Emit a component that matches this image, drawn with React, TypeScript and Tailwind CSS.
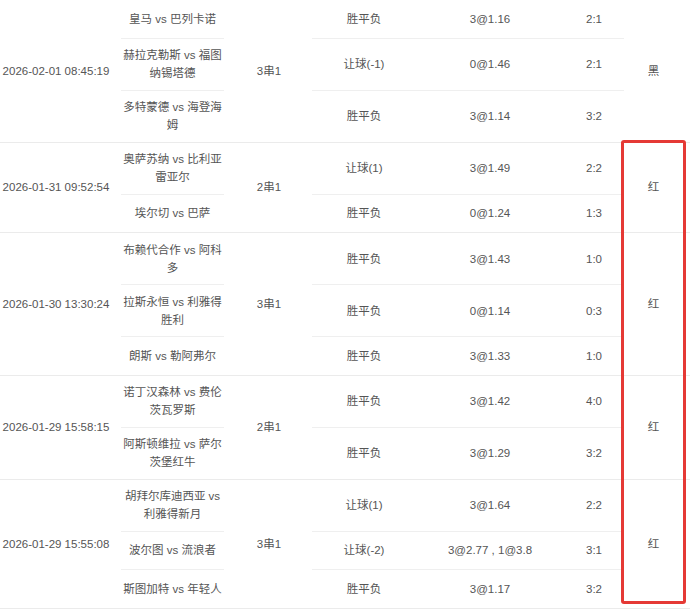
import React from "react";

type Sub = { match: string[]; play: string; odds: string; score: string };
type Row = { date: string; type: string; result: string; subs: Sub[] };

const rows: Row[] = [
  {
    date: "2026-02-01 08:45:19",
    type: "3串1",
    result: "黑",
    subs: [
      { match: ["皇马 vs 巴列卡诺"], play: "胜平负", odds: "3@1.16", score: "2:1" },
      { match: ["赫拉克勒斯 vs 福图", "纳锡塔德"], play: "让球(-1)", odds: "0@1.46", score: "2:1" },
      { match: ["多特蒙德 vs 海登海", "姆"], play: "胜平负", odds: "3@1.14", score: "3:2" },
    ],
  },
  {
    date: "2026-01-31 09:52:54",
    type: "2串1",
    result: "红",
    subs: [
      { match: ["奥萨苏纳 vs 比利亚", "雷亚尔"], play: "让球(1)", odds: "3@1.49", score: "2:2" },
      { match: ["埃尔切 vs 巴萨"], play: "胜平负", odds: "0@1.24", score: "1:3" },
    ],
  },
  {
    date: "2026-01-30 13:30:24",
    type: "3串1",
    result: "红",
    subs: [
      { match: ["布赖代合作 vs 阿科", "多"], play: "胜平负", odds: "3@1.43", score: "1:0" },
      { match: ["拉斯永恒 vs 利雅得", "胜利"], play: "胜平负", odds: "0@1.14", score: "0:3" },
      { match: ["朗斯 vs 勒阿弗尔"], play: "胜平负", odds: "3@1.33", score: "1:0" },
    ],
  },
  {
    date: "2026-01-29 15:58:15",
    type: "2串1",
    result: "红",
    subs: [
      { match: ["诺丁汉森林 vs 费伦", "茨瓦罗斯"], play: "胜平负", odds: "3@1.42", score: "4:0" },
      { match: ["阿斯顿维拉 vs 萨尔", "茨堡红牛"], play: "胜平负", odds: "3@1.29", score: "3:2" },
    ],
  },
  {
    date: "2026-01-29 15:55:08",
    type: "3串1",
    result: "红",
    subs: [
      { match: ["胡拜尔库迪西亚 vs", "利雅得新月"], play: "让球(1)", odds: "3@1.64", score: "2:2" },
      { match: ["波尔图 vs 流浪者"], play: "让球(-2)", odds: "3@2.77 , 1@3.8", score: "3:1" },
      { match: ["斯图加特 vs 年轻人"], play: "胜平负", odds: "3@1.17", score: "3:2" },
    ],
  },
];

const rowStart = ["row-start-1", "row-start-2", "row-start-3"];
const rowSpan: Record<number, string> = { 1: "row-span-1", 2: "row-span-2", 3: "row-span-3" };

function MainRow({ row }: { row: Row }) {
  const n = row.subs.length;
  const span = rowSpan[n];
  return (
    <div className="grid grid-cols-[112px_114px_86px_104px_148px_60px_59px_1fr] border-b border-[#ebebeb]">
      <div className={`col-start-1 row-start-1 ${span} flex items-center justify-center whitespace-nowrap`}>
        {row.date}
      </div>
      {row.subs.map((s, i) => {
        const last = i === n - 1;
        const cell = last ? "min-h-[37.5px]" : "min-h-[38.5px] border-b border-[#efefef]";
        return (
          <React.Fragment key={i}>
            <div
              className={`col-start-2 ${rowStart[i]} ml-[9px] mr-[2px] ${cell} flex flex-col items-center justify-center text-center py-[7.5px] leading-[18px] whitespace-nowrap`}
            >
              {s.match.map((l, j) => (
                <span key={j}>{l}</span>
              ))}
            </div>
            <div className={`col-start-4 ${rowStart[i]} ${cell} flex items-center justify-center whitespace-nowrap`}>
              {s.play}
            </div>
            <div className={`col-start-5 ${rowStart[i]} ${cell} flex items-center justify-center whitespace-nowrap`}>
              {s.odds}
            </div>
            <div className={`col-start-6 ${rowStart[i]} ${cell} flex items-center justify-center whitespace-nowrap`}>
              {s.score}
            </div>
          </React.Fragment>
        );
      })}
      <div className={`col-start-3 row-start-1 ${span} flex items-center justify-center`}>{row.type}</div>
      <div className={`col-start-7 row-start-1 ${span} flex items-center justify-center`}>{row.result}</div>
    </div>
  );
}

export default function App() {
  return (
    <div className="relative w-[690px] h-[610px] overflow-hidden bg-white text-[#555] text-[11.5px] leading-[18px] font-['Liberation_Sans','Noto_Sans_CJK_SC',sans-serif]">
      {rows.map((r, i) => (
        <MainRow key={i} row={r} />
      ))}
      <div className="absolute left-[621px] top-[140px] w-[65px] h-[464px] border-[3px] border-[#e53935] rounded-[3px] pointer-events-none" />
    </div>
  );
}
